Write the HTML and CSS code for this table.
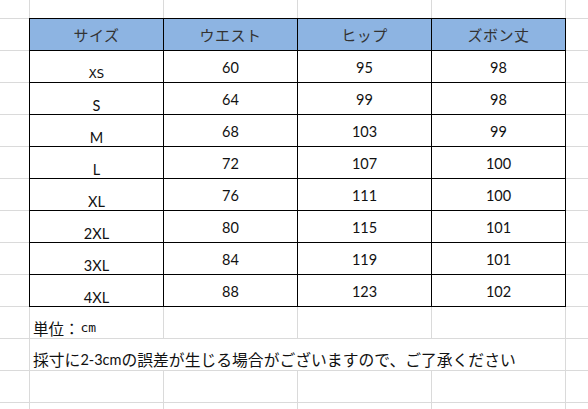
FILE: index.html
```html
<!DOCTYPE html>
<html lang="ja">
<head>
<meta charset="utf-8">
<title>サイズ表</title>
<link rel="stylesheet" href="styles.css">
</head>
<body>
<div class="sheet">
  <div class="size-table">
    <div class="cell head">サイズ</div>
    <div class="cell head">ウエスト</div>
    <div class="cell head">ヒップ</div>
    <div class="cell head">ズボン丈</div>

    <div class="cell size mono">XS</div><div class="cell num">60</div><div class="cell num">95</div><div class="cell num">98</div>
    <div class="cell size">S</div><div class="cell num">64</div><div class="cell num">99</div><div class="cell num">98</div>
    <div class="cell size">M</div><div class="cell num">68</div><div class="cell num">103</div><div class="cell num">99</div>
    <div class="cell size">L</div><div class="cell num">72</div><div class="cell num">107</div><div class="cell num">100</div>
    <div class="cell size">XL</div><div class="cell num">76</div><div class="cell num">111</div><div class="cell num">100</div>
    <div class="cell size">2XL</div><div class="cell num">80</div><div class="cell num">115</div><div class="cell num">101</div>
    <div class="cell size">3XL</div><div class="cell num">84</div><div class="cell num">119</div><div class="cell num">101</div>
    <div class="cell size">4XL</div><div class="cell num">88</div><div class="cell num">123</div><div class="cell num">102</div>
  </div>
  <p class="note">単位：<span class="mono-cm">cm</span></p>
  <p class="note note-wide">採寸に<span class="latin">2-3cm</span>の誤差が生じる場合がございますので、ご了承ください</p>
</div>
</body>
</html>
```

FILE: styles.css
```css
html, body {
  margin: 0;
  padding: 0;
  background: #ffffff;
}

.sheet {
  width: 588px;
  height: 409px;
  box-sizing: border-box;
  padding: 18px 0 0 29px;
  overflow: hidden;
  background-color: #ffffff;
  background-image:
    linear-gradient(to right, transparent 133px, #dadada 133px),
    linear-gradient(to bottom, transparent 31px, #dadada 31px);
  background-size: 134px 100%, 100% 32px;
  background-position: 30px 0, 0 19px;
  font-family: "Noto Sans CJK JP", sans-serif;
  color: #111;
}

.size-table {
  display: grid;
  grid-template-columns: repeat(4, 134px);
  grid-auto-rows: 32px;
  width: max-content;
  border-left: 1px solid #000;
  border-top: 1px solid #000;
}

.cell {
  box-sizing: border-box;
  border-right: 1px solid #000;
  border-bottom: 1px solid #000;
  background: #ffffff;
  display: flex;
  justify-content: center;
  align-items: center;
  font-family: "Lato", "Liberation Sans", sans-serif;
  font-size: 14.5px;
  line-height: 16px;
  color: #111;
}

.head {
  background: #8db4e2;
  font-family: "Noto Sans CJK JP", sans-serif;
  font-size: 15px;
  color: #333;
  letter-spacing: 0.5px;
  padding-top: 1px;
}

.num {
  padding-top: 2px;
}

.size {
  align-items: flex-end;
  padding-bottom: 0;
}

.mono {
  font-family: "DejaVu Sans Mono", monospace;
  font-size: 13px;
}

.note {
  margin: 0;
  height: 32px;
  box-sizing: border-box;
  display: flex;
  align-items: flex-end;
  padding: 0 0 1px 4px;
  font-size: 15.5px;
  line-height: 20px;
  color: #111;
  white-space: nowrap;
}

.note-wide {
  margin-left: 1px;
  width: 535px;
  height: 31px;
  padding-left: 3px;
  padding-bottom: 0;
  font-size: 15.8px;
  background: #ffffff;
}

.mono-cm {
  font-family: "DejaVu Sans Mono", monospace;
  font-size: 13px;
  padding-left: 1px;
}

.latin {
  font-family: "Lato", "Liberation Sans", sans-serif;
  font-size: 14.5px;
}
```
